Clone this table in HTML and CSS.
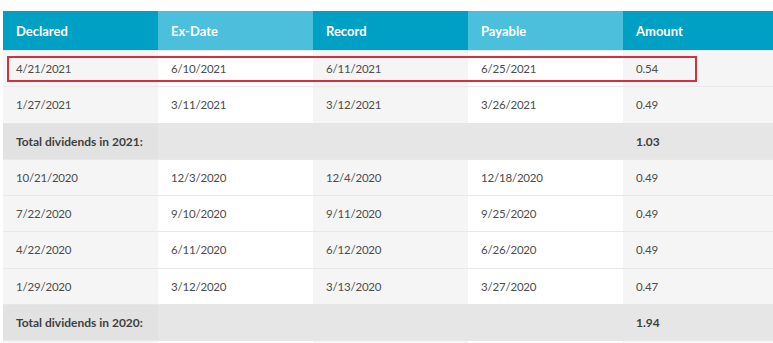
FILE: index.html
```html
<!DOCTYPE html>
<html>
<head>
<meta charset="utf-8">
<link rel="stylesheet" href="styles.css">
</head>
<body>
<div class="wrap">
<table class="divs">
  <thead>
    <tr><th>Declared</th><th>Ex-Date</th><th>Record</th><th>Payable</th><th>Amount</th></tr>
  </thead>
  <tbody>
    <tr class="hl"><td>4/21/2021</td><td>6/10/2021</td><td>6/11/2021</td><td>6/25/2021</td><td>0.54</td></tr>
    <tr><td>1/27/2021</td><td>3/11/2021</td><td>3/12/2021</td><td>3/26/2021</td><td>0.49</td></tr>
    <tr class="total"><td>Total dividends in 2021:</td><td></td><td></td><td></td><td>1.03</td></tr>
    <tr><td>10/21/2020</td><td>12/3/2020</td><td>12/4/2020</td><td>12/18/2020</td><td>0.49</td></tr>
    <tr><td>7/22/2020</td><td>9/10/2020</td><td>9/11/2020</td><td>9/25/2020</td><td>0.49</td></tr>
    <tr><td>4/22/2020</td><td>6/11/2020</td><td>6/12/2020</td><td>6/26/2020</td><td>0.49</td></tr>
    <tr><td>1/29/2020</td><td>3/12/2020</td><td>3/13/2020</td><td>3/27/2020</td><td>0.47</td></tr>
    <tr class="total"><td>Total dividends in 2020:</td><td></td><td></td><td></td><td>1.94</td></tr>
    <tr><td></td><td></td><td></td><td></td><td></td></tr>
  </tbody>
</table>
<div class="box"></div>
</div>
</body>
</html>
```
FILE: styles.css
```css
html, body { margin: 0; padding: 0; background: #fff; overflow: hidden; }
.wrap { position: relative; padding: 11px 0 0 3px; }
.divs {
  border-collapse: collapse;
  width: 775px;
  table-layout: fixed;
  font-family: Lato, "Liberation Sans", sans-serif;
}
.divs th {
  height: 39px;
  padding: 0 13px;
  text-align: left;
  color: #fff;
  font-size: 13px;
  font-weight: 700;
  background: #00a0c4;
}
.divs th:nth-child(even) { background: #4bbfdb; }
.divs td {
  height: 35.25px;
  padding: 0 13px;
  font-size: 11.5px;
  letter-spacing: -0.2px;
  color: #4d4d4d;
  background: #f5f5f5;
  border-top: 1px solid #e8e8e8;
}
.divs td:nth-child(even) { background: #fff; }
.divs tr.total td { background: #e6e6e6; font-weight: 700; color: #3f3f3f; font-size: 12px; letter-spacing: 0; border-top-color: #e6e6e6; }
.divs tr.total td:first-child { background: #e2e2e2; }
.box {
  position: absolute;
  left: 7px;
  top: 56px;
  width: 686px;
  height: 22px;
  border: 2px solid #d2323c;
}
```
